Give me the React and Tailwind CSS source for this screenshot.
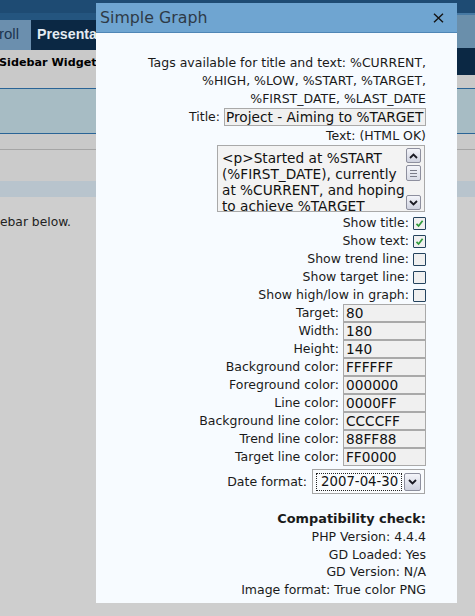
import React from "react";

function Checkbox({ checked }) {
  return (
    <span className="flex h-[13px] w-[13px] items-center justify-center rounded-[1px] border border-[#24435e] bg-[#f0f0f0]">
      {checked && (
        <svg width="11" height="11" viewBox="0 0 11 11">
          <path d="M2.5 5.8 L4.6 8 L8.6 2.8" fill="none" stroke="#2f9a3a" strokeWidth="1.7" />
        </svg>
      )}
    </span>
  );
}

function Chevron({ up }) {
  return (
    <svg width="9" height="6" viewBox="0 0 9 6">
      <path
        d={up ? "M1 5 L4.5 1.5 L8 5" : "M1 1 L4.5 4.5 L8 1"}
        fill="none"
        stroke="#1b1b24"
        strokeWidth="1.8"
      />
    </svg>
  );
}

function ScrollButton({ up }) {
  return (
    <div className="flex h-[15px] w-[15px] items-center justify-center rounded-[2px] border border-[#8d8f9e] bg-gradient-to-b from-[#f4f5fa] to-[#cfd2df]">
      <Chevron up={up} />
    </div>
  );
}

const fields = [
  ["Target:", "80"],
  ["Width:", "180"],
  ["Height:", "140"],
  ["Background color:", "FFFFFF"],
  ["Foreground color:", "000000"],
  ["Line color:", "0000FF"],
  ["Background line color:", "CCCCFF"],
  ["Trend line color:", "88FF88"],
  ["Target line color:", "FF0000"],
];

const checks = [
  ["Show title:", true],
  ["Show text:", true],
  ["Show trend line:", false],
  ["Show target line:", false],
  ["Show high/low in graph:", false],
];

export default function App() {
  return (
    <div className="relative h-[616px] w-[475px] overflow-hidden bg-[#cecece] font-['DejaVu_Sans',sans-serif] text-[#1a1a1a]">
      {/* page behind the dialog */}
      <div className="h-[13px] bg-[#1e4b73]" />
      <div className="flex h-[75px]">
        <div className="flex flex-1 flex-col">
          <div className="h-[7px] bg-[#24557f]" />
          <div className="flex h-[30px] font-['Liberation_Sans',Arial,sans-serif]">
            <div className="w-[31px] overflow-hidden bg-[#6b8fae] pt-[5px] text-[15px] leading-[18px] text-[#1b3550]">
              <span className="ml-[-1px]">roll</span>
            </div>
            <div className="w-[65px] overflow-hidden whitespace-nowrap bg-[#0b2844] pl-[6px] pt-[5px] text-[14.2px] font-bold leading-[18px] text-[#e4ebf2]">
              Presentation
            </div>
            <div className="flex-1 bg-[#0b2844]" />
          </div>
          <div className="flex-1 bg-[#c9c9c9] pt-[4px] text-[11.2px] font-bold leading-[18px] text-black">
            <div className="ml-[-1px] w-[97px] overflow-hidden whitespace-nowrap">Sidebar Widgets</div>
          </div>
        </div>
        <div className="flex w-[18px] flex-col">
          <div className="h-[2px] bg-[#4679a3]" />
          <div className="h-[33px] bg-[#6a8fab]" />
          <div className="h-[27px] bg-[#0b2844]" />
          <div className="flex-1 bg-[#c9c9c9]" />
        </div>
      </div>
      <div className="h-[46px] border-y border-[#2a6496] bg-[#a7bcc4]" />
      <div className="h-[16px] border-b border-[#a5a5a5] bg-[#c9c9c9]" />
      <div className="h-[31px] bg-[#cbcbcb]" />
      <div className="h-[16px] bg-[#b8c4cd]" />
      <div className="mt-[16px] text-[12.3px] leading-[18px] text-[#222]">ebar below.</div>

      {/* dialog */}
      <div className="absolute left-[96px] top-[3px] flex h-[600px] w-[361px] flex-col bg-[#f7fbff]">
        <div className="flex h-[30px] items-center justify-between border-b border-[#4f86b6] bg-[#6fa5d1] pl-[4px] pr-[13px]">
          <span className="text-[15.8px] leading-[20px] text-[#2e3a46]">Simple Graph</span>
          <svg width="11" height="10" viewBox="0 0 11 10">
            <path d="M1 0.8 L10 9.2 M10 0.8 L1 9.2" stroke="#141414" strokeWidth="1.4" />
          </svg>
        </div>

        <div className="flex flex-col pr-[31px] pt-[21px] text-[12.5px] leading-[18px]">
          <div className="text-right">
            Tags available for title and text: %CURRENT,
            <br />
            %HIGH, %LOW, %START, %TARGET,
            <br />
            %FIRST_DATE, %LAST_DATE
          </div>

          <div className="flex h-[18px] items-center justify-end gap-[4px]">
            <span>Title:</span>
            <div className="flex h-[18px] w-[202px] items-center overflow-hidden whitespace-nowrap border border-[#a9a9a9] bg-[#f0f0f0] px-[1px] text-[13.7px] text-[#111]">
              Project - Aiming to %TARGET
            </div>
          </div>

          <div className="mt-[1px] h-[18px] text-right">Text: (HTML OK)</div>

          <div className="ml-auto mr-[1px] flex h-[67px] w-[208px] border border-[#a9a9a9] bg-[#f3f3f3]">
            <div className="flex-1 overflow-hidden whitespace-nowrap pl-[4px] pt-[4px] text-[13.7px] leading-[16px] text-[#111]">
              &lt;p&gt;Started at %START
              <br />
              (%FIRST_DATE), currently
              <br />
              at %CURRENT, and hoping
              <br />
              to achieve %TARGET
            </div>
            <div className="mb-[1px] mr-[3px] mt-[2px] flex w-[15px] flex-col">
              <ScrollButton up />
              <div className="mt-[2px] flex h-[16px] w-[15px] flex-col items-center justify-center gap-[2px] rounded-[2px] border border-[#8d8f9e] bg-gradient-to-b from-[#f4f5fa] to-[#d9dce6]">
                <div className="h-px w-[7px] bg-[#7a7c88]" />
                <div className="h-px w-[7px] bg-[#7a7c88]" />
                <div className="h-px w-[7px] bg-[#7a7c88]" />
              </div>
              <div className="flex-1" />
              <ScrollButton />
            </div>
          </div>

          <div className="mt-[2px] flex flex-col">
            {checks.map(([label, checked]) => (
              <div key={label} className="flex h-[18px] items-center justify-end gap-[4px]">
                <span>{label}</span>
                <Checkbox checked={checked} />
              </div>
            ))}
          </div>

          <div className="flex flex-col">
            {fields.map(([label, value]) => (
              <div key={label} className="flex h-[18px] items-center justify-end gap-[4px]">
                <span>{label}</span>
                <div className="flex h-[18px] w-[83px] items-center border border-[#a9a9a9] bg-[#f0f0f0] px-[2px] text-[13.7px] text-[#111]">
                  {value}
                </div>
              </div>
            ))}
          </div>

          <div className="mr-[1px] mt-[3px] flex h-[25px] items-center justify-end gap-[5px]">
            <span>Date format:</span>
            <div className="flex h-[25px] w-[113px] items-center border border-[#a5a5a5] bg-[#f9fbfd] pl-[3px] pr-[3px]">
              <div className="flex h-[18px] flex-1 items-center border border-dotted border-[#222] pl-[4px] text-[13.3px] text-[#111]">
                2007-04-30
              </div>
              <div className="ml-[2px] flex h-[18px] w-[17px] items-center justify-center rounded-[2px] border border-[#8d8f9e] bg-gradient-to-b from-[#f4f5fa] to-[#cfd2df]">
                <Chevron />
              </div>
            </div>
          </div>

          <div className="mt-[16px] text-right leading-[17.75px]">
            <div className="text-[12.9px] font-bold">Compatibility check:</div>
            <div>PHP Version: 4.4.4</div>
            <div>GD Loaded: Yes</div>
            <div>GD Version: N/A</div>
            <div>Image format: True color PNG</div>
          </div>
        </div>
      </div>
    </div>
  );
}
